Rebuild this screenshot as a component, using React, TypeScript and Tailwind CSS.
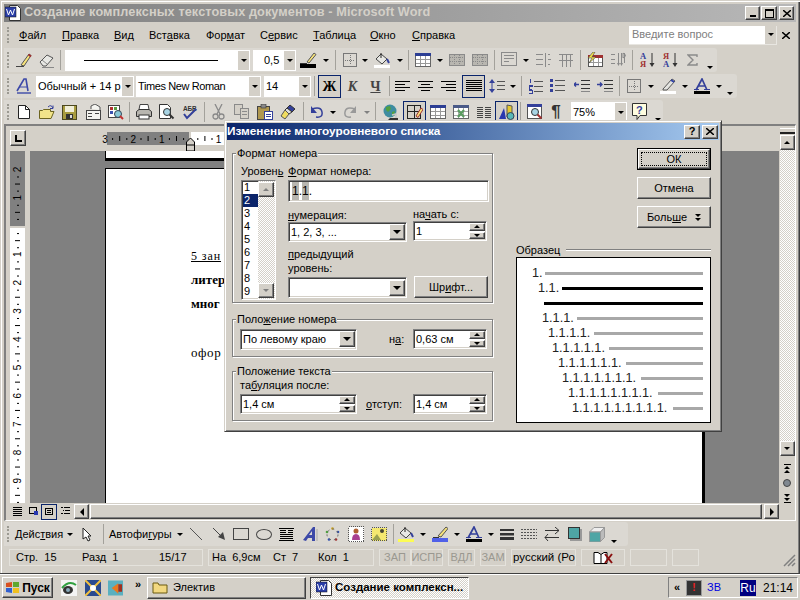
import type { ReactNode } from "react";

const raised = "border border-t-white border-l-white border-r-[#404040] border-b-[#404040] shadow-[inset_-1px_-1px_0_#808080] bg-[#d4d0c8]";
const sunken = "border border-t-[#808080] border-l-[#808080] border-r-white border-b-white shadow-[inset_1px_1px_0_#404040,inset_-1px_-1px_0_#d4d0c8] bg-white";
const dither = "bg-[repeating-conic-gradient(#fff_0_25%,#d4d0c8_0_50%)] bg-[length:2px_2px]";

function Ico({ children, w = 16, h = 16 }: { children: ReactNode; w?: number; h?: number }) {
  return (
    <svg width={w} height={h} viewBox={`0 0 ${w} ${h}`} fill="none">
      {children}
    </svg>
  );
}

function Slot({ c, children }: { c: string; children?: ReactNode }) {
  return <div className={`${c} h-full flex items-center justify-center shrink-0`}>{children}</div>;
}

function Grip() {
  return (
    <div className="w-[8px] h-full flex items-center pl-[3px] shrink-0">
      <div className="h-[16px] w-[2px] border-l-2 border-dotted border-[#9c9a92]" />
    </div>
  );
}

function Tri({ up = false, dim = false }: { up?: boolean; dim?: boolean }) {
  if (up) return <div className={`w-0 h-0 border-x-[3px] border-b-[3px] border-x-transparent ${dim ? "border-b-[#808080]" : "border-b-black"}`} />;
  return <div className={`w-0 h-0 border-x-[3px] border-t-[3px] border-x-transparent ${dim ? "border-t-[#808080]" : "border-t-black"}`} />;
}

function DD({ c = "w-[11px]", dim = false }: { c?: string; dim?: boolean }) {
  return (
    <Slot c={c}>
      <Tri dim={dim} />
    </Slot>
  );
}

function Sep({ c }: { c: string }) {
  return (
    <Slot c={c}>
      <div className="w-px h-[20px] bg-[#a3a19b]" />
    </Slot>
  );
}

function Over({ c }: { c: string }) {
  return (
    <Slot c={`${c} items-end pb-[3px]`}>
      <Tri />
    </Slot>
  );
}

function Combo({ c, text, children }: { c: string; text?: string; children?: ReactNode }) {
  return (
    <div className={`${c} h-[21px] bg-white flex items-center shrink-0`}>
      <div className="flex-1 min-w-0 pl-[2px] overflow-hidden whitespace-nowrap text-[11px] flex items-center">{text}{children}</div>
      <div className="w-[11px] h-[19px] mr-px bg-[#d4d0c8] flex items-center justify-center shrink-0">
        <Tri />
      </div>
    </div>
  );
}

const line = (d: string, s = "#000") => <path d={d} stroke={s} shapeRendering="crispEdges" />;

const Pen = (
  <Ico>
    {line("M0 14.5h8", "#444")}
    <path d="M5 13L13 2l2 1.5L8 14z" fill="#f6e27a" stroke="#555" />
    <path d="M12.5 2.5l2.5 2" stroke="#a03030" strokeWidth="2" />
  </Ico>
);
const Eraser = (
  <Ico>
    <path d="M1 10L8 3l6 3-7 8H4z" fill="#e8e8e4" stroke="#555" />
    <path d="M3 8l5 4" stroke="#888" />
    {line("M3 15.5h12", "#888")}
  </Ico>
);
const PenColor = (
  <Ico w={17}>
    <path d="M7 10L14 1l2 1.5L9 11z" fill="#f6e27a" stroke="#555" />
    {line("M0 11.5h7", "#333")}
    <rect x="0" y="12" width="16" height="4" fill="#000" />
  </Ico>
);
const BorderBox = (c = "#666") => (
  <Ico w={14} h={14}>
    <rect x=".5" y=".5" width="13" height="13" stroke={c} shapeRendering="crispEdges" />
    <path d="M7 2v10M2 7h10" stroke={c} strokeDasharray="1 1" shapeRendering="crispEdges" />
  </Ico>
);
const FillBucket = (bar: string) => (
  <Ico w={17}>
    <path d="M7 2l6 5-5 5-6-5z" fill="#e8e8e4" stroke="#444" />
    <path d="M7 6V1" stroke="#222" />
    <path d="M13 7l2 4" stroke="#34409a" strokeWidth="2" />
    <rect x="0" y="13" width="16" height="3" fill={bar} />
  </Ico>
);
const TableIc = (
  <Ico>
    <rect x=".5" y="1.5" width="15" height="13" fill="#fff" stroke="#666" shapeRendering="crispEdges" />
    <rect x="0" y="1" width="16" height="3" fill="#2c3e94" />
    <path d="M1 7.5h14M1 11h14M5.5 4v10M10.5 4v10" stroke="#999" shapeRendering="crispEdges" />
  </Ico>
);
const GridDis = (
  <Ico>
    <rect x=".5" y="2.5" width="15" height="11" fill="#b8b6b0" stroke="#8a8a8a" shapeRendering="crispEdges" />
    <path d="M1 5.5h14M1 9h14M5.5 3v10M10.5 3v10" stroke="#8a8a8a" strokeDasharray="1 1" shapeRendering="crispEdges" />
  </Ico>
);
const TextBoxDis = (
  <Ico>
    <rect x=".5" y=".5" width="15" height="13" stroke="#8a8a8a" shapeRendering="crispEdges" />
    <path d="M3 3.5h10M3 6.5h10M3 9.5h5" stroke="#8a8a8a" shapeRendering="crispEdges" />
  </Ico>
);
const ColsDis = (
  <Ico>
    <path d="M1 2.5h7M1 7.5h7M1 12.5h7M10 1v14M13 2.5h2M13 12.5h2M12.5 7.5h3" stroke="#8a8a8a" shapeRendering="crispEdges" />
  </Ico>
);
const RowsDis = (
  <Ico>
    <path d="M1 2.5h14M1 8.5h14M4.5 2v13M8.5 2v13M12.5 2v13" stroke="#8a8a8a" shapeRendering="crispEdges" />
  </Ico>
);
const AutoTable = (
  <Ico>
    <rect x="1.5" y="4.5" width="14" height="10" fill="#fff" stroke="#555" shapeRendering="crispEdges" />
    <rect x="1" y="3" width="15" height="3" fill="#a03030" />
    <path d="M2 10h13M6 6v8M11 6v8" stroke="#999" shapeRendering="crispEdges" />
    <path d="M6 0L1 6h4L2 11l7-6H5l3-5z" fill="#f4e24a" stroke="#444" strokeWidth=".6" />
  </Ico>
);
const SumDis = (
  <Ico>
    <path d="M1 2.5h4M1 7h4M1 11h4M8 1v10M11 1v10M14 1v10" stroke="#8a8a8a" shapeRendering="crispEdges" />
    <path d="M7 11l1.500 3 1.500-3zM10 11l1.500 3 1.500-3z" fill="#8a8a8a" />
    <path d="M13 1l3 2.500-3 2.500z" stroke="#8a8a8a" />
  </Ico>
);
const Sort = (top: string, bottom: string, topC: string, botC: string) => (
  <svg width="15" height="16" viewBox="0 0 15 16">
    <text x="0" y="7" fontSize="8.500" fontWeight="700" fontFamily="Liberation Serif" fill={topC}>{top}</text>
    <text x="0" y="15" fontSize="8.500" fontWeight="700" fontFamily="Liberation Serif" fill={botC}>{bottom}</text>
    <path d="M12 1v11" stroke="#333" />
    <path d="M9.500 11h5L12 15z" fill="#333" />
  </svg>
);
const Sigma = (
  <Ico w={11} h={12}>
    <path d="M10 3V1H1l5 5-5 5h9V9" stroke="#8a8a8a" strokeWidth="1.400" />
  </Ico>
);
const AStyle = (
  <svg width="16" height="16" viewBox="0 0 16 16">
    <path d="M1 13L8 1h2l2 12" stroke="#3d49a8" strokeWidth="1.600" fill="none" />
    <path d="M3 9h8" stroke="#3d49a8" />
    <path d="M1 15h14" stroke="#3d49a8" strokeWidth="1.400" />
  </svg>
);
const Lines = (rows: string[]) => (
  <Ico w={16} h={13}>
    {rows.map((d) => (
      <path key={d} d={d} stroke="#000" shapeRendering="crispEdges" />
    ))}
  </Ico>
);
const AlignLeft = Lines(["M0 1.500h15", "M0 4.500h10", "M0 7.500h15", "M0 10.500h10"]);
const AlignCenter = Lines(["M0 1.500h15", "M3 4.500h9", "M0 7.500h15", "M3 10.500h9"]);
const AlignRight = Lines(["M0 1.500h15", "M5 4.500h10", "M0 7.500h15", "M5 10.500h10"]);
const Justify = Lines(["M0 .500h16", "M0 2.500h16", "M0 4.500h16", "M0 6.500h16", "M0 8.500h16", "M0 10.500h16"]);
const Spacing = (
  <Ico>
    <path d="M3 1L0 5h6zM3 15L0 11h6z" fill="#34409a" />
    <path d="M3 5v6" stroke="#34409a" />
    <path d="M8 3.500h8M8 7.500h8M8 11.500h8" stroke="#555" strokeWidth="1" shapeRendering="crispEdges" />
  </Ico>
);
const Numbered = (
  <Ico w={15}>
    <path d="M2 1v4M1 7h3v1.500H1V11h3M1 12.500h3v3H1" stroke="#34409a" shapeRendering="crispEdges" />
    <path d="M6 3.500h9M6 8.500h9M6 13.500h9" stroke="#555" shapeRendering="crispEdges" />
  </Ico>
);
const Bullets = (
  <Ico>
    <rect x="0" y="1" width="3" height="3" fill="#34409a" />
    <rect x="0" y="6" width="3" height="3" fill="#34409a" />
    <rect x="0" y="11" width="3" height="3" fill="#34409a" />
    <path d="M5 2.500h10M5 7.500h10M5 12.500h10" stroke="#555" shapeRendering="crispEdges" />
  </Ico>
);
const Indent = (flip: boolean) => (
  <Ico>
    <path d="M7 2.500h9M7 6.500h9M7 10.500h9" stroke="#333" strokeWidth="1.500" shapeRendering="crispEdges" />
    <path d="M7 13.500h9" stroke="#888" shapeRendering="crispEdges" />
    <path d={flip ? "M0 6.500h5M2 4.500L0 6.500l2 2" : "M0 6.500h5M3 4.500l2 2-2 2"} stroke="#34409a" strokeWidth="1.400" />
  </Ico>
);
const Highlight = (
  <Ico w={17}>
    <path d="M3 11L12 1l3 2-8 9-4 0z" fill="#e4e4e0" stroke="#555" />
    <path d="M11 2l3 2" stroke="#34a" strokeWidth="2" />
    <rect x="0" y="13" width="16" height="3" fill="#fff" />
  </Ico>
);
const FontColor = (bar = "#000") => (
  <svg width="16" height="16" viewBox="0 0 16 16">
    <path d="M2 12L8 1l5 11M4.500 8h6" stroke="#34409a" strokeWidth="1.700" fill="none" />
    <path d="M0 11.500h5M10 11.500h6" stroke="#34409a" />
    <rect x="0" y="13" width="16" height="3" fill={bar} />
  </svg>
);
const NewDoc = (
  <Ico w={12}>
    <path d="M.5 1.500h7l4 4v9H.500z" fill="#fff" stroke="#222" />
    <path d="M7.500 1.500v4h4" stroke="#222" />
  </Ico>
);
const OpenFolder = (
  <Ico>
    <path d="M.5 6.500h3l1-1h7v2H15l-3 7H.5z" fill="#f2e48a" stroke="#6c6420" />
    <path d="M9 3q3-3 5 1M14 1.500V4.500h-3" stroke="#34409a" />
  </Ico>
);
const Save = (
  <Ico w={15} h={15}>
    <rect x=".5" y=".5" width="14" height="14" fill="#a89c40" stroke="#4c4820" shapeRendering="crispEdges" />
    <rect x="3" y="1" width="9" height="6" fill="#f1efd8" />
    <rect x="4" y="9" width="7" height="5" fill="#333" />
    <rect x="8" y="10" width="2" height="3" fill="#ddd" />
  </Ico>
);
const Mail = (
  <Ico>
    <path d="M6 5V2l4-2 5 3v3" fill="#f4f4f0" stroke="#555" />
    <rect x="1.500" y="6.500" width="14" height="9" fill="#f4f4f0" stroke="#444" shapeRendering="crispEdges" />
    <path d="M3 9.500h4M3 12.500h4M10 9.500h4" stroke="#444" shapeRendering="crispEdges" />
  </Ico>
);
const WebPage = (
  <Ico>
    <rect x=".5" y="1.500" width="11" height="12" fill="#fff" stroke="#444" shapeRendering="crispEdges" />
    <rect x="2" y="3" width="3" height="3" fill="#b03030" />
    <rect x="6" y="3" width="3" height="3" fill="#5a9c40" />
    <rect x="2" y="7" width="3" height="3" fill="#3a50b0" />
    <circle cx="10" cy="10" r="3.500" fill="#88c8d8" stroke="#345" />
    <path d="M12 12l3 3" stroke="#c03030" strokeWidth="2" />
  </Ico>
);
const Printer = (
  <Ico>
    <path d="M4 .5h8l1 5H3z" fill="#fff" stroke="#444" />
    <path d="M.5 7.500L3 5.500h10l2.500 2v5h-15z" fill="#b8b6b0" stroke="#333" />
    <rect x="3" y="11" width="10" height="4" fill="#fff" stroke="#333" />
  </Ico>
);
const Preview = (
  <Ico>
    <path d="M.5.5h8l3 3v11H.500z" fill="#fff" stroke="#333" />
    <circle cx="8" cy="8" r="3.500" fill="#a8d4e4" stroke="#333" />
    <path d="M10.500 10.500l4 4" stroke="#333" strokeWidth="2" />
  </Ico>
);
const Spell = (
  <svg width="16" height="16" viewBox="0 0 16 16">
    <text x="1" y="6.500" fontSize="6.500" fontWeight="700" fontFamily="Liberation Sans" fill="#333" letterSpacing="-.2">АБВ</text>
    <path d="M2 10l3 4 9-9" stroke="#34409a" strokeWidth="2" fill="none" />
  </svg>
);
const Cut = (
  <Ico w={13}>
    <path d="M3 0l5 10M10 0L5 10" stroke="#8a8a8a" strokeWidth="1.300" />
    <circle cx="3.500" cy="12.500" r="2.500" stroke="#8a8a8a" strokeWidth="1.300" />
    <circle cx="9.500" cy="12.500" r="2.500" stroke="#8a8a8a" strokeWidth="1.300" />
  </Ico>
);
const CopyDis = (
  <Ico>
    <rect x=".5" y=".5" width="8" height="10" fill="#d4d0c8" stroke="#8a8a8a" shapeRendering="crispEdges" />
    <rect x="6.500" y="4.500" width="8" height="10" fill="#d4d0c8" stroke="#8a8a8a" shapeRendering="crispEdges" />
    <path d="M8 7.500h5M8 10.500h5" stroke="#8a8a8a" shapeRendering="crispEdges" />
  </Ico>
);
const Paste = (
  <Ico>
    <rect x=".5" y="2.500" width="12" height="13" fill="#b09850" stroke="#444" shapeRendering="crispEdges" />
    <rect x="4" y="0" width="5" height="4" fill="#888" stroke="#333" strokeWidth=".6" />
    <rect x="7.500" y="7.500" width="8" height="8" fill="#fff" stroke="#34409a" shapeRendering="crispEdges" />
    <path d="M9 10.500h5M9 12.500h5" stroke="#34409a" shapeRendering="crispEdges" />
  </Ico>
);
const Painter = (
  <Ico>
    <path d="M10 1l5 4-3 3-5-4z" fill="#34409a" stroke="#333" />
    <path d="M7 4l5 4-3 2-4-4z" fill="#ddd" stroke="#333" />
    <path d="M5 6L1 12l4 3 4-5z" fill="#f0dc60" stroke="#555" />
  </Ico>
);
const Undo = (c: string, mirror: boolean) => (
  <Ico w={14} h={12}>
    <g transform={mirror ? "translate(14 0) scale(-1 1)" : undefined}>
      <path d="M2 3q9-3 10 3t-6 5" stroke={c} strokeWidth="1.500" />
      <path d="M1 0v7h6z" fill={c} />
    </g>
  </Ico>
);
const Globe = (
  <Ico>
    <circle cx="7" cy="7" r="6.500" fill="#3e8ca0" />
    <path d="M3 3l4-1 1 3-3 3-2-2zM9 8l3-1-1 4-2 1z" fill="#52a040" />
    <path d="M7 14h8v2H5z" fill="#333" />
    <path d="M9 11l4-1v4" stroke="#c8c8c8" strokeWidth="1.500" />
  </Ico>
);
const TablesBorders = (
  <Ico>
    <path d="M.5 1.500h13v13H.5zM.5 7.500h13M7 2v12" stroke="#222" shapeRendering="crispEdges" />
    <path d="M9 12l5-8 2 1.500-5 8z" fill="#f6e27a" stroke="#a03030" />
  </Ico>
);
const ExcelIc = (
  <Ico>
    <rect x=".5" y="1.500" width="15" height="13" fill="#fff" stroke="#666" shapeRendering="crispEdges" />
    <rect x="0" y="1" width="16" height="3" fill="#4a5a88" />
    <path d="M1 7.500h14M1 11h14M5.500 4v10M10.500 4v10" stroke="#aaa" shapeRendering="crispEdges" />
    <path d="M5 6l6 7M11 6l-6 7" stroke="#5a9c60" strokeWidth="2.200" />
  </Ico>
);
const Columns = (
  <Ico w={14} h={12}>
    <path d="M0 1.500h6M8 1.500h6M0 3.500h6M8 3.500h6M0 5.500h6M8 5.500h6M0 7.500h6M8 7.500h6M0 9.500h6M8 9.500h6M0 11.500h6M8 11.500h6" stroke="#444" shapeRendering="crispEdges" />
  </Ico>
);
const Drawing = (
  <Ico>
    <path d="M8 1l5 1v8l-5 3z" fill="#e4c830" stroke="#555" />
    <path d="M0 15L5 4l2 11z" fill="#2838b0" />
    <circle cx="11.500" cy="12" r="3.500" fill="#58b8b8" stroke="#345" />
  </Ico>
);
const DocMap = (
  <Ico>
    <rect x=".5" y=".5" width="14" height="14" fill="#fff" stroke="#555" shapeRendering="crispEdges" />
    <rect x="0" y="0" width="15" height="3" fill="#34409a" />
    <circle cx="8" cy="8" r="3.500" fill="#a8d4e4" stroke="#333" />
    <path d="M10.500 10.500l4 4" stroke="#a03030" strokeWidth="2" />
  </Ico>
);
const HelpIc = (
  <svg width="16" height="18" viewBox="0 0 16 18">
    <path d="M.5.5h14v12H8l-3 4v-4H.500z" fill="#fffde0" stroke="#333" />
    <text x="4" y="11" fontSize="11" fontWeight="700" fontFamily="Liberation Sans" fill="#34409a">?</text>
  </svg>
);
const WordDoc = (
  <Ico>
    <path d="M4.500.5h8l3 3v12h-11z" fill="#fff" stroke="#333" />
    <rect x="0" y="2" width="11" height="10" fill="#2a3ea8" stroke="#111" strokeWidth=".5" />
    <path d="M1.500 4l2 6 2-5 2 5 2-6" stroke="#fff" />
  </Ico>
);

function Row({ c, children }: { c: string; children: ReactNode }) {
  return <div className={`${c} h-[24px] bg-[#dbd8d2] rounded-r-[3px] flex items-center shrink-0`}>{children}</div>;
}

function Title() {
  return (
    <div className="h-[18px] bg-gradient-to-r from-[#808080] to-[#b8b8b8] flex items-center pl-[1px] pr-[2px] shrink-0">
      {WordDoc}
      <span className="ml-[3px] font-bold text-[#d4d0c8] text-[12.7px] tracking-[0.1px] whitespace-nowrap">Создание комплексных текстовых документов - Microsoft Word</span>
      <div className={`ml-auto w-[15px] h-[14px] ${raised} flex items-end justify-center pb-[2px]`}>
        <div className="w-[6px] h-[2px] bg-black" />
      </div>
      <div className={`ml-[1px] w-[16px] h-[14px] ${raised} flex items-center justify-center`}>
        <div className="w-[9px] h-[9px] border border-t-2 border-black" />
      </div>
      <div className={`ml-[2px] w-[15px] h-[14px] ${raised} flex items-center justify-center`}>
        <XMark />
      </div>
    </div>
  );
}

function XMark() {
  return (
    <svg width="8" height="7" viewBox="0 0 8 7">
      <path d="M0 0l8 7M8 0L0 7" stroke="#000" strokeWidth="1.500" />
    </svg>
  );
}

function MenuBar() {
  const items: [string, string, string, string][] = [
    ["", "Ф", "айл", "w-[43px]"],
    ["", "П", "равка", "w-[52px]"],
    ["", "В", "ид", "w-[35px]"],
    ["Вст", "а", "вка", "w-[57px]"],
    ["Фор", "м", "ат", "w-[54px]"],
    ["С", "е", "рвис", "w-[53px]"],
    ["", "Т", "аблица", "w-[57px]"],
    ["", "О", "кно", "w-[42px]"],
    ["", "С", "правка", "w-[60px]"],
  ];
  return (
    <div className="h-[24px] flex items-center shrink-0 text-[11px] mt-px mb-[1px]">
      <Grip />
      <div className="w-[7px]" />
      {items.map((m) => (
        <span key={m[0] + m[1] + m[2]} className={`${m[3]} whitespace-nowrap`}>
          {m[0]}
          <u>{m[1]}</u>
          {m[2]}
        </span>
      ))}
      <div className="ml-[157px] w-[148px] h-[19px] bg-white border-r border-b border-[#e8e6e1] flex items-center">
        <span className="flex-1 pl-[3px] text-[#808080] text-[11px]">Введите вопрос</span>
        <div className="w-[11px] h-full bg-[#d4d0c8] flex items-center justify-center">
          <Tri />
        </div>
      </div>
      <div className="ml-[4px] w-[10px] flex justify-center">
        <XMark />
      </div>
    </div>
  );
}

function ToolRows() {
  return (
    <div className="flex flex-col gap-[2px] shrink-0">
      <Row c="w-[713px]">
        <Grip />
        <Slot c="w-[23px]">{Pen}</Slot>
        <Slot c="w-[23px]">{Eraser}</Slot>
        <Sep c="w-[5px]" />
        <Combo c="w-[185px] ml-[2px]">
          <div className="ml-[17px] w-[134px] h-px bg-black" />
        </Combo>
        <Combo c="w-[43px] ml-[3px] [&>div:first-child]:pl-[11px]" text="0,5" />
        <Slot c="w-[24px]">{PenColor}</Slot>
        <DD />
        <Sep c="w-[9px]" />
        <Slot c="w-[19px]">{BorderBox("#777")}</Slot>
        <DD />
        <Slot c="w-[24px]">{FillBucket("#fff")}</Slot>
        <DD />
        <Sep c="w-[6px]" />
        <Slot c="w-[23px]">{TableIc}</Slot>
        <DD />
        <Slot c="w-[23px]">{GridDis}</Slot>
        <Slot c="w-[23px]">{GridDis}</Slot>
        <Sep c="w-[6px]" />
        <Slot c="w-[23px]">{TextBoxDis}</Slot>
        <DD />
        <Slot c="w-[23px]">{ColsDis}</Slot>
        <Slot c="w-[23px]">{RowsDis}</Slot>
        <Sep c="w-[6px]" />
        <Slot c="w-[24px]">{AutoTable}</Slot>
        <Slot c="w-[22px]">{SumDis}</Slot>
        <Sep c="w-[6px]" />
        <Slot c="w-[24px]">{Sort("А", "Я", "#34409a", "#a03030")}</Slot>
        <Slot c="w-[23px]">{Sort("Я", "А", "#a03030", "#34409a")}</Slot>
        <Slot c="w-[21px]">{Sigma}</Slot>
        <Over c="w-[14px]" />
      </Row>
      <Row c="w-[733px]">
        <Grip />
        <Slot c="w-[23px]">{AStyle}</Slot>
        <Combo c="w-[98px] ml-[1px]" text="Обычный + 14 р" />
        <Combo c="w-[125px] ml-[2px] tracking-[-0.4px]" text="Times New Roman" />
        <Combo c="w-[47px] ml-[3px]" text="14" />
        <Sep c="w-[7px]" />
        <div className="w-[23px] h-[23px] border border-[#0a246a] bg-[#d4d0c8] flex items-center justify-center shrink-0 font-['Liberation_Serif',serif] font-bold text-[14px]">Ж</div>
        <Slot c="w-[23px] font-['Liberation_Serif',serif] font-bold italic text-[14px] text-[#444]">К</Slot>
        <Slot c="w-[23px] font-['Liberation_Serif',serif] font-bold underline text-[14px] text-[#444]">Ч</Slot>
        <Sep c="w-[5px]" />
        <Slot c="w-[22px]">{AlignLeft}</Slot>
        <Slot c="w-[24px]">{AlignCenter}</Slot>
        <Slot c="w-[22px]">{AlignRight}</Slot>
        <div className="w-[23px] h-[23px] ml-[2px] border border-[#0a246a] bg-[#d4d0c8] flex items-center justify-center shrink-0">{Justify}</div>
        <Slot c="w-[23px]">{Spacing}</Slot>
        <DD c="w-[10px]" />
        <Sep c="w-[7px]" />
        <Slot c="w-[21px]">{Numbered}</Slot>
        <Slot c="w-[24px]">{Bullets}</Slot>
        <Slot c="w-[23px]">{Indent(true)}</Slot>
        <Slot c="w-[23px]">{Indent(false)}</Slot>
        <Sep c="w-[6px]" />
        <Slot c="w-[23px]">{BorderBox("#777")}</Slot>
        <DD />
        <Slot c="w-[24px]">{Highlight}</Slot>
        <DD c="w-[9px]" />
        <Slot c="w-[25px]">{FontColor()}</Slot>
        <DD c="w-[9px]" />
        <Over c="w-[14px]" />
      </Row>
      <Row c="w-[659px]">
        <Grip />
        <Slot c="w-[23px]">{NewDoc}</Slot>
        <Slot c="w-[23px]">{OpenFolder}</Slot>
        <Slot c="w-[23px]">{Save}</Slot>
        <Slot c="w-[23px]">{Mail}</Slot>
        <Slot c="w-[23px]">{WebPage}</Slot>
        <Sep c="w-[5px]" />
        <Slot c="w-[24px]">{Printer}</Slot>
        <Slot c="w-[22px]">{Preview}</Slot>
        <Slot c="w-[23px]">{Spell}</Slot>
        <Sep c="w-[6px]" />
        <Slot c="w-[23px]">{Cut}</Slot>
        <Slot c="w-[23px]">{CopyDis}</Slot>
        <Slot c="w-[23px]">{Paste}</Slot>
        <Slot c="w-[24px]">{Painter}</Slot>
        <Sep c="w-[6px]" />
        <Slot c="w-[21px]">{Undo("#34409a", false)}</Slot>
        <DD />
        <Slot c="w-[23px]">{Undo("#999", true)}</Slot>
        <DD dim />
        <Sep c="w-[7px]" />
        <Slot c="w-[23px]">{Globe}</Slot>
        <div className="w-[23px] h-[23px] ml-[1px] border border-[#0a246a] bg-[#d4d0c8] flex items-center justify-center shrink-0">{TablesBorders}</div>
        <Slot c="w-[23px]">{TableIc}</Slot>
        <Slot c="w-[23px]">{ExcelIc}</Slot>
        <Slot c="w-[23px]">{Columns}</Slot>
        <div className="w-[23px] h-[23px] border border-[#0a246a] bg-[#d4d0c8] flex items-center justify-center shrink-0">{Drawing}</div>
        <Sep c="w-[5px]" />
        <Slot c="w-[23px]">{DocMap}</Slot>
        <Slot c="w-[20px] text-[17px] font-bold text-[#333]">¶</Slot>
        <Combo c="w-[56px] ml-[5px]" text="75%" />
        <Slot c="w-[25px]">{HelpIc}</Slot>
        <Over c="w-[11px]" />
      </Row>
    </div>
  );
}

// ruler strip over the page, ends where the dialog starts
function HRuler() {
  const marks = [
    { d: "3", x: 0 },
    { d: "2", x: 28.4 },
    { d: "1", x: 56.8 },
    { d: "1", x: 113.6 },
  ];
  const ticks: number[] = [];
  for (let i = 0; i < 17; i++) ticks.push(i * 7.1);
  return (
    <svg width="122" height="22" viewBox="0 0 122 22" className="ml-[72px] mt-[3px]">
      <rect x="5" y="3" width="82" height="13" fill="#808080" />
      <rect x="89" y="3" width="33" height="13" fill="#fff" />
      {ticks.map((t, i) =>
        i % 4 === 0 ? null : (
          <rect key={t} x={3 + t} y={i % 2 === 0 ? 7 : 9} width="1" height={i % 2 === 0 ? 5 : 2} fill="#000" />
        ),
      )}
      {marks.map((m) => (
        <text key={m.x} x={3 + m.x} y="13.500" textAnchor="middle" fontSize="10" fontFamily="Liberation Sans" fill="#000">
          {m.d}
        </text>
      ))}
      <path d="M84.500 22V13l4-4 4 4v9zM84.500 16h8" fill="#d4d0c8" stroke="#000" />
    </svg>
  );
}

function VRuler() {
  const digits: number[] = [-2, -1, 1, 2, 3, 4, 5, 6, 7, 8, 9];
  const step = 28.3;
  const orig = 75;
  const ticks: number[] = [];
  for (let i = -8; i < 40; i++) ticks.push(i);
  return (
    <svg width="24" height="352" viewBox="0 0 24 352" className="shrink-0">
      <rect x="4" y="0" width="15" height="75" fill="#808080" />
      <rect x="4" y="77" width="15" height="275" fill="#fff" />
      {ticks.map((i) =>
        i % 4 === 0 ? null : (
          <rect key={i} x={i % 2 === 0 ? 9 : 11} y={orig + (i * step) / 4} width={i % 2 === 0 ? 5 : 2} height="1" fill="#000" />
        ),
      )}
      {digits.map((d) => (
        <text
          key={d}
          x="0"
          y="0"
          transform={`translate(15 ${orig + d * step}) rotate(-90)`}
          textAnchor="middle"
          fontSize="10"
          fontFamily="Liberation Sans"
          fill="#000"
        >
          {Math.abs(d)}
        </text>
      ))}
    </svg>
  );
}

function Page() {
  return (
    <div className="flex-1 min-w-0 bg-[#808080] pl-[75px] pr-[74px] flex flex-col overflow-hidden">
      <div className="h-[10px] bg-white border-l border-black border-r-[3px] border-b-[3px] shrink-0" />
      <div className="mt-[7px] flex-1 bg-white border-t border-l border-black border-r-[3px] pt-[75px] pl-[85px] font-['Liberation_Serif',serif] text-[13px] leading-[24px]">
        <div className="underline text-[12px] tracking-[0.9px]">5 зан</div>
        <div className="font-bold">литер</div>
        <div className="font-bold">мног</div>
        <div className="mt-[25px] tracking-[0.6px]">офор</div>
      </div>
    </div>
  );
}

function HScroll() {
  return (
    <div className="h-[17px] flex items-center shrink-0">
      <div className="w-[3px]" />
      <Slot c="w-[16px]">
        <Ico w={9} h={9}>
          <path d="M0 .5h9M0 2.500h9M0 4.500h9M0 6.500h9M0 8.500h9" stroke="#000" shapeRendering="crispEdges" />
        </Ico>
      </Slot>
      <Slot c="w-[16px]">
        <Ico w={9} h={9}>
          <rect x=".5" y=".5" width="7" height="6" stroke="#000" shapeRendering="crispEdges" />
          <rect x="5" y="4" width="4" height="4" fill="#2838b0" />
        </Ico>
      </Slot>
      <div className="w-[16px] h-[16px] border border-[#0a246a] flex items-center justify-center shrink-0">
        <Ico w={8} h={7}>
          <rect x=".5" y=".5" width="7" height="6" stroke="#000" shapeRendering="crispEdges" />
          <path d="M2 2.500h4M2 4.500h4" stroke="#000" shapeRendering="crispEdges" />
        </Ico>
      </div>
      <Slot c="w-[17px]">
        <Ico w={9} h={9}>
          <path d="M0 .5h2M3 .5h6M2 3.500h1M4 3.500h5M0 6.500h2M3 6.500h6" stroke="#000" shapeRendering="crispEdges" />
        </Ico>
      </Slot>
      <div className={`w-[15px] h-[15px] ${raised} flex items-center justify-center shrink-0`}>
        <div className="w-0 h-0 border-y-[4px] border-r-[4px] border-y-transparent border-r-black" />
      </div>
      <div className={`ml-[1px] flex-1 h-[15px] ${raised}`} />
      <div className={`ml-[2px] w-[15px] h-[15px] ${raised} flex items-center justify-center shrink-0`}>
        <div className="w-0 h-0 border-y-[4px] border-l-[4px] border-y-transparent border-l-black" />
      </div>
    </div>
  );
}

function Browse({ up }: { up: boolean }) {
  return (
    <div className="flex flex-col items-center gap-px">
      {up ? <div className="w-[7px] h-px bg-black" /> : null}
      <Tri up={up} />
      <Tri up={up} />
      {!up ? <div className="w-[7px] h-px bg-black" /> : null}
    </div>
  );
}

function VScroll() {
  return (
    <div className="w-[16px] flex flex-col items-center shrink-0 pt-[2px]">
      <div className="w-[15px] h-[6px] border-t border-white border-b-2 border-b-[#222]" />
      <div className={`w-[15px] h-[15px] ${raised} flex items-center justify-center shrink-0 mt-[1px]`}>
        <Tri up />
      </div>
      <div className={`w-[15px] h-[291px] ${dither}`} />
      <div className={`w-[15px] h-[15px] ${raised} flex items-center justify-center shrink-0`}>
        <Tri />
      </div>
      <div className="mt-[4px] h-[16px] flex items-center">
        <Browse up />
      </div>
      <div className="h-[14px] flex items-center">
        <div className="w-[8px] h-[8px] rounded-full bg-[#808890] border border-[#444]" />
      </div>
      <div className="h-[16px] flex items-center">
        <Browse up={false} />
      </div>
    </div>
  );
}

function DrawBar() {
  return (
    <div className="h-[24px] w-[624px] mt-[1px] bg-[#dbd8d2] rounded-r-[3px] flex items-center text-[11px] shrink-0">
      <Grip />
      <span className="w-[51px] ml-[3px] whitespace-nowrap">
        Дейс<u>т</u>вия
      </span>
      <Slot c="w-[8px]">
        <Tri />
      </Slot>
      <Slot c="w-[26px]">
        <svg width="10" height="15" viewBox="0 0 10 15">
          <path d="M1 1v11l3-2 2 4 2-1-2-4h3z" fill="#fff" stroke="#222" />
        </svg>
      </Slot>
      <Sep c="w-[6px]" />
      <span className="w-[67px] ml-[3px] whitespace-nowrap">
        Автофи<u>г</u>уры
      </span>
      <Slot c="w-[8px]">
        <Tri />
      </Slot>
      <Slot c="w-[24px]">
        <Ico w={12} h={12}>
          <path d="M0 0l12 12" stroke="#555" />
        </Ico>
      </Slot>
      <Slot c="w-[21px]">
        <Ico w={12} h={12}>
          <path d="M0 0l9 9" stroke="#444" />
          <path d="M5 9l5-5 2 8z" fill="#444" />
        </Ico>
      </Slot>
      <Slot c="w-[23px]">
        <div className="w-[16px] h-[12px] border border-[#444]" />
      </Slot>
      <Slot c="w-[23px]">
        <div className="w-[16px] h-[11px] rounded-[50%] border border-[#444]" />
      </Slot>
      <Slot c="w-[23px]">{Lines(["M0 .500h15", "M1 2.500h6", "M1 4.500h6", "M9 2.500h5", "M9 4.500h5", "M1 6.500h13", "M1 8.500h13", "M1 10.500h13", "M0 12.500h15"])}</Slot>
      <Slot c="w-[23px]">
        <Ico>
          <path d="M1 14L11 1h2v14h-3v-3H6l-2 3zM7 9h3V5z" fill="#3d49a8" />
          <path d="M15 3v12" stroke="#aaa" />
        </Ico>
      </Slot>
      <Slot c="w-[23px]">
        <Ico w={15} h={15}>
          <circle cx="7.500" cy="1.500" r="1.300" fill="#c8a020" />
          <circle cx="13" cy="5" r="1.300" fill="#3050b0" />
          <circle cx="11" cy="12.500" r="1.300" fill="#a03030" />
          <circle cx="4" cy="12.500" r="1.300" fill="#3050b0" />
          <circle cx="2" cy="5" r="1.300" fill="#50a040" />
          <circle cx="7.500" cy="7.500" r="5.500" stroke="#666" strokeDasharray="2 3" />
        </Ico>
      </Slot>
      <Slot c="w-[23px]">
        <Ico>
          <rect x=".5" y=".5" width="15" height="15" fill="#fff" stroke="#555" strokeDasharray="1 1" shapeRendering="crispEdges" />
          <circle cx="8" cy="5" r="2.500" fill="#b06030" />
          <path d="M4 14q0-6 4-6t4 6z" fill="#a84090" />
        </Ico>
      </Slot>
      <Slot c="w-[23px]">
        <Ico>
          <rect x=".5" y="1.500" width="15" height="13" fill="#f4e870" stroke="#555" strokeDasharray="1 1" shapeRendering="crispEdges" />
          <circle cx="11" cy="5" r="2" fill="#443" />
          <path d="M1 14l5-6 4 6z" fill="#99a050" />
        </Ico>
      </Slot>
      <Sep c="w-[6px]" />
      <Slot c="w-[21px]">{FillBucket("#fcfc54")}</Slot>
      <DD />
      <Slot c="w-[23px]">
        <Ico>
          <path d="M6 10L14 1l2 1.500L9 11z" fill="#f6e27a" stroke="#555" />
          {line("M1 11.500h6", "#333")}
          <rect x="0" y="12" width="16" height="4" fill="#5060e8" />
        </Ico>
      </Slot>
      <DD />
      <Slot c="w-[23px]">{FontColor()}</Slot>
      <DD />
      <Slot c="w-[22px]">
        <Ico h={12}>
          <path d="M1 1h14v2H1zM1 5h14v2.500H1zM1 9h14v3H1z" fill="#333" />
        </Ico>
      </Slot>
      <Slot c="w-[22px]">
        <Ico h={12}>
          <path d="M0 1.500h16M0 4.500h16M0 7.500h16M0 10.500h16" stroke="#555" strokeDasharray="2 1" shapeRendering="crispEdges" />
        </Ico>
      </Slot>
      <Slot c="w-[24px]">
        <Ico h={14}>
          <path d="M1 3.500h14M1 10.500h14M11 0l4 3.500-4 3.500M4 7l-3 3.500 3 3.500" stroke="#333" />
        </Ico>
      </Slot>
      <Slot c="w-[22px]">
        <Ico w={14} h={14}>
          <rect x="2" y="2" width="12" height="12" fill="#999" />
          <rect x=".5" y=".5" width="11" height="11" fill="#4ea5a5" stroke="#333" />
        </Ico>
      </Slot>
      <Slot c="w-[22px]">
        <Ico h={15}>
          <path d="M.5 5L5 .5h10.500l-4 4.500z" fill="#eee" stroke="#999" />
          <path d="M11.500 5l4-4.500v10l-4 4z" fill="#bbb" stroke="#999" />
          <rect x=".5" y="5" width="11" height="10" fill="#4ea5a5" stroke="#999" />
        </Ico>
      </Slot>
      <Over c="w-[11px]" />
    </div>
  );
}

function Panel({ c, children, dim = false }: { c: string; children?: ReactNode; dim?: boolean }) {
  return (
    <div className={`${c} h-[17px] border border-[#e4e2dc] flex items-center shrink-0 whitespace-nowrap ${dim ? "text-[#9a9890] justify-center" : ""}`}>{children}</div>
  );
}

function StatusBar() {
  return (
    <div className="h-[21px] pt-[2px] flex items-center pl-[5px] gap-[5px] text-[11px] shrink-0 relative">
      <Panel c="w-[194px] pl-[6px] gap-0">
        <span className="w-[66px]">Стр. &nbsp;15</span>
        <span className="w-[77px]">Разд &nbsp;1</span>
        <span>15/17</span>
      </Panel>
      <Panel c="w-[166px] pl-[3px]">
        <span className="w-[61px]">На &nbsp;6,9см</span>
        <span className="w-[45px]">Ст &nbsp;7</span>
        <span>Кол &nbsp;1</span>
      </Panel>
      <Panel c="w-[32px]" dim>ЗАП</Panel>
      <Panel c="w-[32px] -ml-[5px]" dim>ИСПР</Panel>
      <Panel c="w-[27px]" dim>ВДЛ</Panel>
      <Panel c="w-[26px]" dim>ЗАМ</Panel>
      <Panel c="w-[65px] pl-[1px] text-[11.500px] overflow-hidden">русский (Ро</Panel>
      <Panel c="w-[44px] justify-center">
        <Ico w={21} h={14}>
          <path d="M1 1.500h4l3 2v9H1zM8 3.500l3-2h3v11H8" fill="#fff" stroke="#000" />
          <path d="M12 3l7 9M19 3l-7 9" stroke="#8a1010" strokeWidth="2" />
        </Ico>
      </Panel>
      <Panel c="w-[37px]" />
      <Panel c="w-[27px]" />
      <div className="absolute right-0 bottom-0 w-[13px] h-[13px]">
        <svg width="13" height="13" viewBox="0 0 13 13">
          <path d="M12 1L1 12M12 5l-7 7M12 9l-3 3" stroke="#808080" strokeWidth="1.500" />
        </svg>
      </div>
    </div>
  );
}

function Group({ c, label, children }: { c: string; label: ReactNode; children: ReactNode }) {
  return (
    <div className={`${c} relative border border-[#808080] shadow-[1px_1px_0_#fff,inset_1px_1px_0_#fff]`}>
      <span className="absolute -top-[8px] left-[3px] bg-[#d4d0c8] px-px leading-[14px]">{label}</span>
      {children}
    </div>
  );
}

function SelectBox({ c, text }: { c: string; text?: string }) {
  return (
    <div className={`${c} ${sunken} flex items-center shrink-0`}>
      <span className="flex-1 pl-[2px] whitespace-nowrap">{text}</span>
      <div className={`w-[16px] h-[16px] mr-[1px] ${raised} flex items-center justify-center`}>
        <div className="w-0 h-0 border-x-[4px] border-t-[4px] border-x-transparent border-t-black" />
      </div>
    </div>
  );
}

function Spin({ c, text }: { c: string; text: string }) {
  return (
    <div className={`${c} h-[20px] ${sunken} flex items-center shrink-0`}>
      <span className="flex-1 pl-[2px] whitespace-nowrap">{text}</span>
      <div className="w-[16px] h-[16px] mr-[1px] flex flex-col gap-px">
        <div className={`flex-1 ${raised} flex items-center justify-center`}>
          <Tri up />
        </div>
        <div className={`flex-1 ${raised} flex items-center justify-center`}>
          <Tri />
        </div>
      </div>
    </div>
  );
}

const sampleRows = [
  { pl: "pl-[15px]", w: "w-[158px]", n: "1.", black: false },
  { pl: "pl-[21px]", w: "w-[141px]", n: "1.1.", black: true },
  { pl: "pl-[16px]", w: "w-[159px]", n: "", black: true },
  { pl: "pl-[25px]", w: "w-[126px]", n: "1.1.1.", black: false },
  { pl: "pl-[31px]", w: "w-[109px]", n: "1.1.1.1.", black: false },
  { pl: "pl-[35px]", w: "w-[94px]", n: "1.1.1.1.1.", black: false },
  { pl: "pl-[41px]", w: "w-[77px]", n: "1.1.1.1.1.1.", black: false },
  { pl: "pl-[45px]", w: "w-[62px]", n: "1.1.1.1.1.1.1.", black: false },
  { pl: "pl-[51px]", w: "w-[45px]", n: "1.1.1.1.1.1.1.1.", black: false },
  { pl: "pl-[55px]", w: "w-[30px]", n: "1.1.1.1.1.1.1.1.1.", black: false },
];

function Dialog() {
  return (
    <div className="absolute left-[224px] top-[120px] w-[498px] h-[312px] bg-[#d4d0c8] border border-t-[#d4d0c8] border-l-[#d4d0c8] border-r-[#404040] border-b-[#404040] shadow-[inset_1px_1px_0_#fff,inset_-1px_-1px_0_#808080] p-[2px] flex flex-col text-[11px]">
      <div className="h-[17px] bg-gradient-to-r from-[#0a246a] to-[#a6caf0] flex items-center pr-[1px] shrink-0">
        <span className="text-white font-bold text-[11.8px] whitespace-nowrap">Изменение многоуровневого списка</span>
        <div className={`ml-auto w-[16px] h-[14px] ${raised} flex items-center justify-center font-bold text-[11px] leading-none`}>?</div>
        <div className={`ml-[2px] w-[16px] h-[14px] ${raised} flex items-center justify-center`}>
          <XMark />
        </div>
      </div>

      <div className="flex flex-1 min-h-0">
        <div className="w-[261px] ml-[5px] pt-[13px] flex flex-col shrink-0">
          <Group c="h-[150px] pt-[9px] pl-[8px] flex gap-[11px]" label="Формат номера">
            <div className="w-[36px] shrink-0">
              <div className="h-[17px] whitespace-nowrap leading-[17px]">
                Уровен<u>ь</u>
              </div>
              <div className={`w-[35px] h-[120px] ${sunken} flex overflow-hidden`}>
                <div className="w-[16px] pl-px shrink-0 flex flex-col">
                  {["1", "2", "3", "4", "5", "6", "7", "8", "9"].map((n) => (
                    <div key={n} className={`h-[13px] leading-[13px] pl-px ${n === "2" ? "bg-[#0a246a] text-white" : ""}`}>
                      {n}
                    </div>
                  ))}
                </div>
                <div className={`flex-1 flex flex-col justify-between py-px pr-px ${dither}`}>
                  <div className={`h-[15px] ${raised} flex items-center justify-center`}>
                    <Tri up dim />
                  </div>
                  <div className={`h-[15px] ${raised} flex items-center justify-center`}>
                    <Tri dim />
                  </div>
                </div>
              </div>
            </div>
            <div className="flex-1 min-w-0 pr-[3px]">
              <div className="h-[17px] leading-[17px] whitespace-nowrap">
                <u>Ф</u>ормат номера:
              </div>
              <div className={`h-[22px] ${sunken} flex items-center pl-[3px] text-[12px]`}>
                <span className="bg-[#b8b6b0]">1</span>.<span className="bg-[#b8b6b0]">1</span>.
              </div>
              <div className="mt-[6px] flex gap-[6px]">
                <div className="w-[119px]">
                  <div className="h-[14px] leading-[14px]">
                    <u>н</u>умерация:
                  </div>
                  <SelectBox c="h-[20px] w-[119px]" text="1, 2, 3, ..." />
                </div>
                <div className="flex-1">
                  <div className="h-[13px] leading-[13px] whitespace-nowrap">
                    на<u>ч</u>ать с:
                  </div>
                  <Spin c="w-[74px]" text="1" />
                </div>
              </div>
              <div className="mt-[5px] flex gap-[7px]">
                <div className="w-[119px]">
                  <div className="leading-[14px]">
                    <u>п</u>редыдущий
                    <br />
                    уровень:
                  </div>
                  <SelectBox c="mt-[2px] h-[21px] w-[119px]" />
                </div>
                <div className={`self-end w-[74px] h-[22px] ${raised} flex items-center justify-center`}>
                  <span>
                    Шр<u>и</u>фт...
                  </span>
                </div>
              </div>
            </div>
          </Group>

          <Group
            c="h-[38px] mt-[16px] pl-[7px] pr-[4px] pt-[2px] flex items-center"
            label={
              <>
                Поло<u>ж</u>ение номера
              </>
            }
          >
            <SelectBox c="h-[21px] w-[117px]" text="По левому краю" />
            <span className="ml-[32px] w-[24px]">
              н<u>а</u>:
            </span>
            <Spin c="w-[74px]" text="0,63 см" />
          </Group>

          <Group c="h-[50px] mt-[14px] pl-[7px] pr-[4px] pt-[6px]" label="Положение текста">
            <div className="h-[14px] leading-[14px] whitespace-nowrap">
              та<u>б</u>уляция после:
            </div>
            <div className="flex items-center mt-[2px]">
              <Spin c="w-[117px]" text="1,4 см" />
              <span className="ml-[9px] w-[47px]">
                <u>о</u>тступ:
              </span>
              <Spin c="w-[74px]" text="1,4 см" />
            </div>
          </Group>
        </div>

        <div className="ml-[23px] w-[195px] pt-[8px] flex flex-col shrink-0">
          <div className="self-end w-[74px] h-[22px] border border-black">
            <div className={`w-full h-full ${raised} flex items-center justify-center p-[2px]`}>
              <div className="w-full h-full border border-dotted border-black flex items-center justify-center">ОК</div>
            </div>
          </div>
          <div className={`self-end mt-[7px] w-[74px] h-[22px] ${raised} flex items-center justify-center`}>Отмена</div>
          <div className={`self-end mt-[7px] w-[74px] h-[22px] ${raised} flex items-center justify-center gap-[8px]`}>
            <span>
              Боль<u>ш</u>е
            </span>
            <span className="flex flex-col gap-px">
              <Tri />
              <Tri />
            </span>
          </div>
          <div className="mt-[14px] h-[15px] flex items-center">
            <span className="leading-[14px]">Образец</span>
            <div className="ml-[6px] flex-1 h-[2px] bg-[#808080] border-b border-white" />
          </div>
          <div className="h-[166px] bg-white border border-black pt-[8px] text-[12.700px] font-light">
            {sampleRows.map((r) => (
              <div key={r.pl} className={`h-[15px] flex items-center ${r.pl} pr-[7px] whitespace-nowrap text-[#222]`}>
                <span>{r.n}</span>
                <div className={`ml-auto h-[3px] ${r.w} ${r.black ? "bg-black" : "bg-[#a8a8a8]"}`} />
              </div>
            ))}
          </div>
        </div>
      </div>
    </div>
  );
}

function Taskbar() {
  return (
    <div className="flex-1 border-t border-white flex items-center px-[2px] text-[11px] min-h-0">
      <div className={`w-[51px] h-[21px] ${raised} flex items-center justify-center gap-[2px] font-bold text-[12px] shrink-0`}>
        <Ico w={15} h={13}>
          <path d="M1 2l6-1v5H1z" fill="#d85020" />
          <path d="M8 1l6 0v5H8z" fill="#60a830" />
          <path d="M1 7h6v5l-6-1z" fill="#3060d0" />
          <path d="M8 7h6v5H8z" fill="#f0c020" />
        </Ico>
        <span>Пуск</span>
      </div>
      <Slot c="w-[23px] ml-[1px] !justify-end">
        <Ico>
          <rect width="16" height="16" fill="#f4f4f4" />
          <path d="M1 8q7-8 14-3" stroke="#30a040" strokeWidth="2" />
          <ellipse cx="7" cy="10" rx="5" ry="4" fill="#333" />
          <circle cx="7" cy="10" r="2" fill="#8ab" />
        </Ico>
      </Slot>
      <Slot c="w-[31px]">
        <Ico>
          <rect width="16" height="16" fill="#2a4a90" />
          <path d="M0 0l16 16M16 0L0 16" stroke="#f0c040" strokeWidth="2" />
          <circle cx="8" cy="8" r="3" fill="#fff" />
        </Ico>
      </Slot>
      <Slot c="w-[15px]">
        <Ico>
          <rect width="16" height="16" fill="#5ab0c0" />
          <path d="M4 8l7-5v11z" fill="#e87820" />
          <rect x="11" y="4" width="4" height="8" fill="#a03020" />
        </Ico>
      </Slot>
      <span className="ml-[12px] w-[12px] font-bold text-[11px] -mt-[6px]">»</span>
      <div className={`w-[159px] h-[22px] ${raised} flex items-center pl-[4px] gap-[5px] shrink-0`}>
        <Ico h={13}>
          <path d="M1 2h5l1 2h8v8H1z" fill="#f2d880" stroke="#6a5a10" />
        </Ico>
        <span>Электив</span>
      </div>
      <div className={`ml-[4px] w-[159px] h-[22px] border border-t-[#404040] border-l-[#404040] border-r-white border-b-white ${dither} flex items-center pl-[5px] gap-[3px] font-bold text-[11.500px] shrink-0 whitespace-nowrap`}>
        {WordDoc}
        <span>Создание комплексн...</span>
      </div>
      <div className="ml-auto w-[130px] h-[21px] border border-t-[#808080] border-l-[#808080] border-r-white border-b-white flex items-center pl-[5px] shrink-0">
        <span className="w-[12px] font-bold text-[11px] -mt-px">«</span>
        <div className="w-[16px] h-[16px] bg-[#333] border border-[#999] flex items-center justify-center text-[#f02020] font-bold text-[10px]">!</div>
        <span className="ml-[5px] w-[33px] text-[#0000e0] text-[11px]">ЗВ</span>
        <div className="w-[16px] h-[16px] bg-[#000080] text-white flex items-center justify-center text-[12px]">Ru</div>
        <span className="ml-[7px] text-[12px]">21:14</span>
      </div>
    </div>
  );
}

export default function App() {
  return (
    <div className="relative w-[800px] h-[600px] overflow-hidden bg-[#d4d0c8] flex flex-col text-black font-['Liberation_Sans',sans-serif] text-[11px]">
      <div className="h-[574px] flex flex-col px-[4px] pt-[4px] shrink-0 border-b border-[#404040] shadow-[inset_1px_1px_0_#d4d0c8,inset_2px_2px_0_#fff,inset_-1px_0_0_#404040,inset_-2px_0_0_#808080]">
        <Title />
        <MenuBar />
        <ToolRows />
        <div className="h-[397px] flex border-t-2 border-l-2 border-[#808080] border-r border-r-white border-b border-b-white shrink-0 mt-0">
          <div className="flex-1 min-w-0 flex flex-col">
            <div className="h-[25px] flex shrink-0">
              <div className="w-[24px] relative shrink-0 pl-[4px] pt-[4px]">
                <div className={`w-[16px] h-[16px] ${raised} flex items-center justify-center`}>
                  <div className="w-[7px] h-[7px] border-l-2 border-b-2 border-black" />
                </div>
              </div>
              <HRuler />
            </div>
            <div className="h-[352px] flex shrink-0">
              <VRuler />
              <Page />
            </div>
            <HScroll />
          </div>
          <VScroll />
        </div>
        <DrawBar />
        <StatusBar />
      </div>
      <Taskbar />
      <Dialog />
    </div>
  );
}
